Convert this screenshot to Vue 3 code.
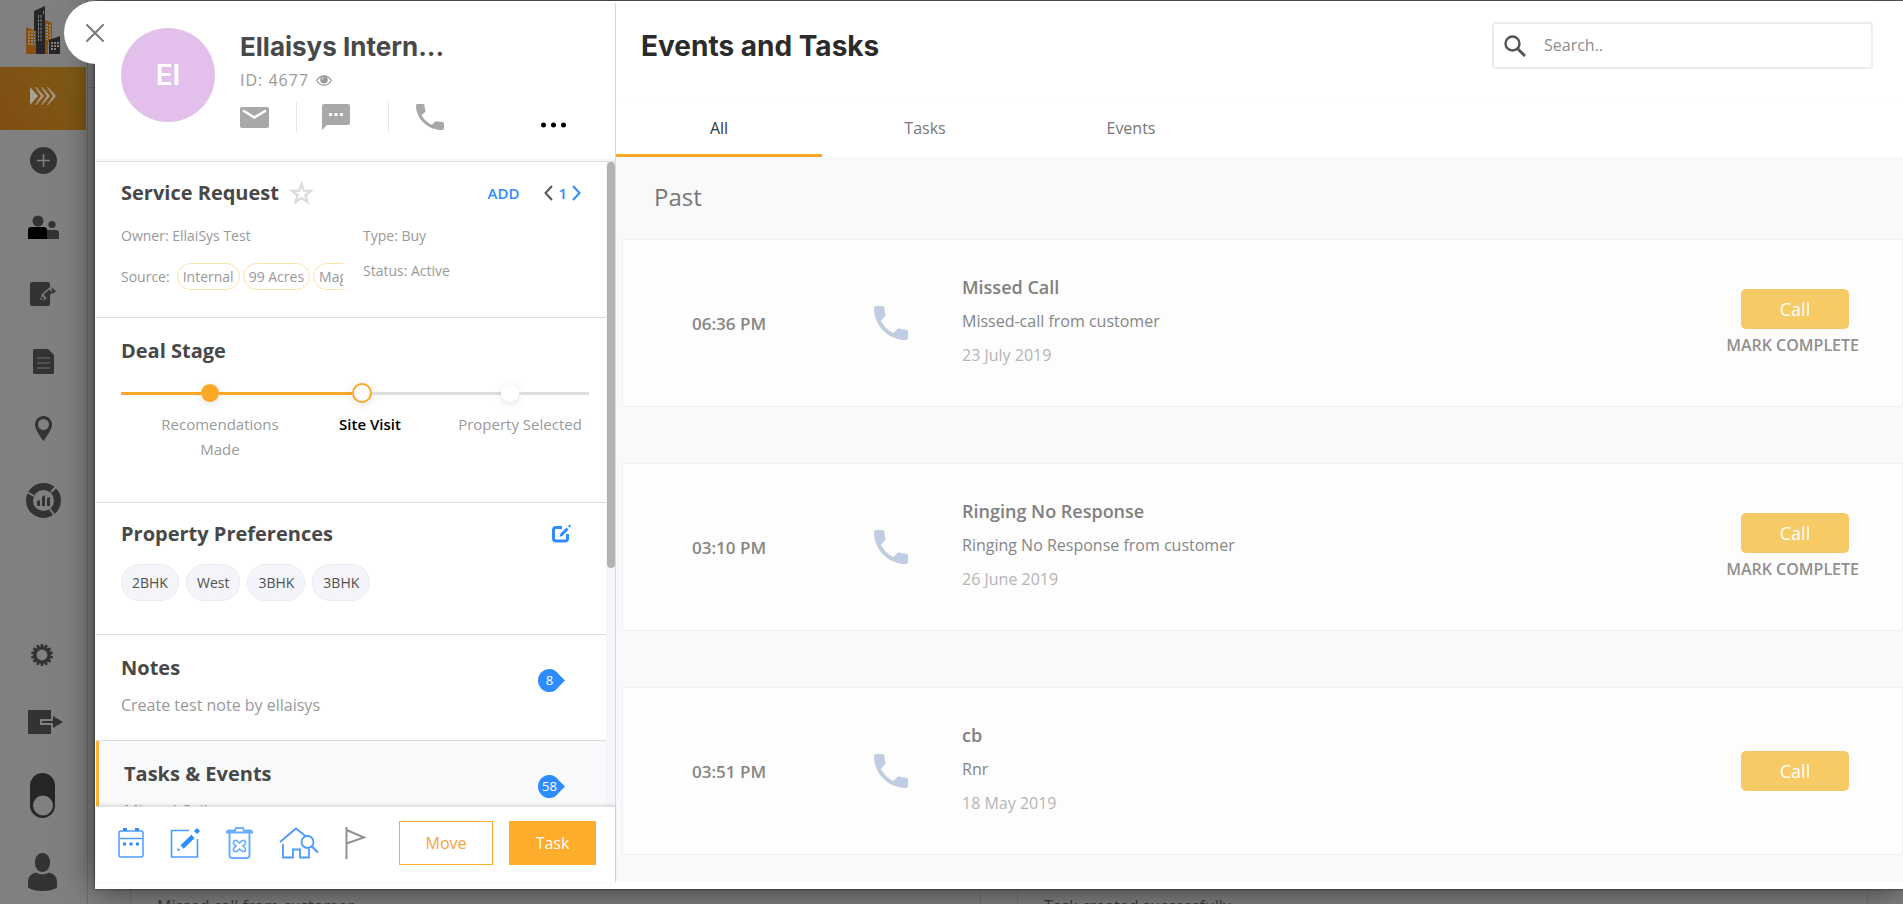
<script setup>
import { ref } from 'vue'

const phone =
  'M6.62 10.79c1.44 2.83 3.76 5.14 6.59 6.59l2.2-2.2c.27-.27.67-.36 1.02-.24 1.12.37 2.33.57 3.57.57.55 0 1 .45 1 1V20c0 .55-.45 1-1 1-9.39 0-17-7.61-17-17 0-.55.45-1 1-1h3.5c.55 0 1 .45 1 1 0 1.25.2 2.45.57 3.57.11.35.03.74-.25 1.02l-2.2 2.2z'

const tabs = ['All', 'Tasks', 'Events']
const activeTab = ref('All')
const query = ref('')
const sources = ['Internal', '99 Acres', 'Magicbricks']
const preferences = ['2BHK', 'West', '3BHK', '3BHK']
const events = [
  { time: '06:36 PM', title: 'Missed Call', text: 'Missed-call from customer', date: '23 July 2019', open: true },
  { time: '03:10 PM', title: 'Ringing No Response', text: 'Ringing No Response from customer', date: '26 June 2019', open: true },
  { time: '03:51 PM', title: 'cb', text: 'Rnr', date: '18 May 2019', open: false },
]
const gearTeeth = Array.from({ length: 14 }, (_, i) => (i * 360) / 14)
</script>

<template>
  <div class="app">
    <nav class="sidebar" aria-label="Main">
      <a href="#" class="logo" aria-label="Home">
        <svg width="36" height="50" viewBox="0 0 36 50">
          <path fill="#262626" d="M9 6l11-5v48H9z" />
          <path fill="#8a5012" d="M1 22l10 4v23H1zM20 15l7 3v17l-4 2v12h-3z" />
          <path fill="#262626" d="M24 35l11-4v18H24z" />
          <path stroke="#808080" stroke-width="1" fill="none" stroke-dasharray="3 1" d="M13.500 10v26M16 10v26M18.500 6v4" />
          <path stroke="#8c8070" stroke-width="2" fill="none" stroke-dasharray="2 1" d="M3 27h7M3 30h7M3 33h7M3 36h7M3 39h7M22 19v16M25 20v14M26 38h8M26 41h8M26 44h5" />
        </svg>
      </a>
      <a href="#" class="item active" aria-label="Leads">
        <svg width="26" height="18" viewBox="0 0 26 18" fill="#aaa093">
          <path d="M0 0l8 9-8 9zM5 0h1l8 9-8 9H5l6-9zM11 0h1l8 9-8 9h-1l6-9zM17 0h1l8 9-8 9h-1l6-9z" />
        </svg>
      </a>
      <div class="group">
        <a href="#" class="item" aria-label="Add">
          <svg width="27" height="27" viewBox="0 0 27 27"><circle cx="13.500" cy="13.500" r="13.500" fill="#333" /><path d="M13.500 7v13M7 13.500h13" stroke="#808080" stroke-width="1.600" /></svg>
        </a>
        <a href="#" class="item" aria-label="Contacts">
          <svg width="31" height="24" viewBox="0 0 31 24"><circle cx="10" cy="6" r="5.500" fill="#333" /><circle cx="24" cy="9.500" r="3.600" fill="#333" /><path fill="#333" d="M19 15h9q3 0 3 3v6H19z" /><path fill="#000" d="M3 12h13q3 0 3 3v9H0v-9q0-3 3-3z" /></svg>
        </a>
        <a href="#" class="item" aria-label="Edit">
          <svg width="26" height="24" viewBox="0 0 26 24"><path fill="#333" d="M2 0h16q2 0 2 2v20q0 2-2 2H2q-2 0-2-2V2q0-2 2-2z" /><path d="M10 18l2-6 8-7 4 4-9 9z" fill="#808080" /><path fill="#333" d="M11 18l1-4 3 3zM13.500 12.500l6-5 3 3-6 6zM21 5l5 4-3 3z" /></svg>
        </a>
        <a href="#" class="item" aria-label="Documents">
          <svg width="21" height="25" viewBox="0 0 21 25"><path fill="#333" d="M1 0h14l6 6v18l-1 1H1l-1-1V1z" /><path d="M4 9h13M4 14h13M4 19h13" stroke="#707070" stroke-width="1.200" /></svg>
        </a>
        <a href="#" class="item" aria-label="Places">
          <svg width="17" height="25" viewBox="0 0 17 25"><path fill="#333" fill-rule="evenodd" d="M8.500 0C3.800 0 0 3.700 0 8.500 0 14 8.500 25 8.500 25S17 14 17 8.500C17 3.700 13.200 0 8.500 0zm0 3a5.500 5.500 0 1 1 0 11 5.500 5.500 0 0 1 0-11z" /></svg>
        </a>
        <a href="#" class="item reports" aria-label="Reports">
          <svg width="35" height="35" viewBox="0 0 35 35"><circle cx="17.500" cy="17.500" r="14" fill="none" stroke="#333" stroke-width="7" /><path d="M8 13l-7-4M25 9l6-6M23 25l6 8" stroke="#808080" stroke-width="2" /><path fill="#333" d="M11 18l3-1v6h-3zM16 14l3-2v11h-3zM21 15l3-1v9h-3z" /></svg>
        </a>
      </div>
      <div class="group bottom">
        <a href="#" class="item" aria-label="Settings">
          <svg width="22" height="22" viewBox="0 0 22 22"><circle cx="11" cy="11" r="7.200" fill="none" stroke="#333" stroke-width="3.500" /><rect v-for="a in gearTeeth" :key="a" x="9.700" y="0" width="2.600" height="4" fill="#333" :transform="`rotate(${a} 11 11)`" /></svg>
        </a>
        <a href="#" class="item" aria-label="Log out">
          <svg class="wide" width="35" height="24" viewBox="0 0 35 24"><path fill="#333" d="M0 0h23v9H12v6h11v9H0z" /><path fill="#333" d="M14 11h11V6l10 6-10 6v-5H14z" /></svg>
        </a>
        <a href="#" class="item tall" aria-label="Theme">
          <svg width="25" height="45" viewBox="0 0 25 45"><rect width="25" height="45" rx="12.500" fill="#262626" /><circle cx="13" cy="32.500" r="10" fill="#808080" /></svg>
        </a>
        <a href="#" class="item user" aria-label="Profile">
          <svg width="29" height="38" viewBox="0 0 29 38"><path fill="#333" d="M14.500 0C19 0 22 4 22 9c0 6-3 10-7.500 10S7 15 7 9c0-5 3-9 7.500-9zM8 19.500q6.500 4 13 0 8 2 8 9v6q-5 3.500-14.500 3.500T0 34.500v-6q0-7 8-9z" /></svg>
        </a>
      </div>
    </nav>

    <div class="behind">
      <div class="behind-top"></div>
      <div class="behind-cards">
        <div class="behind-card"><p>Missed call from customer</p></div>
        <div class="behind-card"><p>Task created successfully</p></div>
      </div>
    </div>

    <section class="modal" role="dialog" aria-label="Customer details">
      <button class="close" type="button" aria-label="Close">
        <svg width="18" height="18" viewBox="0 0 18 18"><path d="M1 1l16 16M17 1L1 17" stroke="#7a7a7a" stroke-width="2" stroke-linecap="round" /></svg>
      </button>

      <aside class="details">
        <header class="person">
          <div class="avatar">EI</div>
          <div class="person-info">
            <h1>Ellaisys Intern...</h1>
            <p class="pid">ID: 4677
              <svg width="16" height="11" viewBox="0 0 16 11"><path d="M.7 5.500Q3.500.8 8 .8t7.300 4.700Q12.500 10.200 8 10.200T.7 5.500z" fill="none" stroke="#999" stroke-width="1.200" /><circle cx="8" cy="4.800" r="3.800" fill="#999" /><path d="M6 4.600Q6.200 2.800 8 2.600" stroke="#fff" fill="none" stroke-width=".8" /></svg>
            </p>
            <div class="contact">
              <button type="button" aria-label="Mail"><svg width="29" height="21" viewBox="0 0 29 21"><rect width="29" height="21" rx="2" fill="#a8a8a8" /><path d="M3 3.500l11.500 7 11.500-7" fill="none" stroke="#fff" stroke-width="2.600" /></svg></button>
              <button type="button" aria-label="Message"><svg width="28" height="26" viewBox="0 0 28 26"><path fill="#a8a8a8" d="M2 0h24q2 0 2 2v17q0 2-2 2H5l-5 5V2q0-2 2-2z" /><path fill="#fff" d="M7 9h3v3H7zM12.500 9h3v3h-3zM18 9h3v3h-3z" /></svg></button>
              <button type="button" aria-label="Phone"><svg width="28" height="26" viewBox="3 3 18 18" preserveAspectRatio="none"><path :d="phone" fill="#a8a8a8" /></svg></button>
              <button type="button" class="more" aria-label="More"><svg width="25" height="6" viewBox="0 0 25 6"><circle cx="2.500" cy="3" r="2.500" /><circle cx="12.500" cy="3" r="2.500" /><circle cx="22.500" cy="3" r="2.500" /></svg></button>
            </div>
          </div>
        </header>

        <div class="scroll">
          <div class="sections">
            <section class="block service">
              <div class="head">
                <h2>Service Request</h2>
                <button type="button" aria-label="Favourite"><svg width="25" height="24" viewBox="0 0 25 24"><path d="M12.500 3l2.400 6.600 7.100.3-5.600 4.300 2 6.800-5.900-3.900L6.600 21l2-6.800L3 9.900l7.100-.3z" fill="none" stroke="#dcdcdc" stroke-width="2.400" /></svg></button>
                <button type="button" class="add">ADD</button>
                <div class="pager">
                  <button type="button" aria-label="Previous"><svg width="9" height="16" viewBox="0 0 9 16"><path d="M8 1L1.500 8 8 15" fill="none" stroke="#555" stroke-width="2" /></svg></button>
                  <span>1</span>
                  <button type="button" aria-label="Next"><svg width="9" height="16" viewBox="0 0 9 16"><path d="M1 1l6.500 7L1 15" fill="none" stroke="#2f8cff" stroke-width="2" /></svg></button>
                </div>
              </div>
              <div class="facts">
                <div class="fact-left">
                  <p>Owner: EllaiSys Test</p>
                  <div class="sources"><span>Source:</span><b v-for="s in sources" :key="s">{{ s }}</b></div>
                </div>
                <div class="fact-right">
                  <p>Type: Buy</p>
                  <p>Status: Active</p>
                </div>
              </div>
            </section>

            <section class="block deal">
              <h2>Deal Stage</h2>
              <div class="track">
                <i class="line a done"></i><i class="dot full"></i>
                <i class="line b done"></i><i class="dot ring"></i>
                <i class="line c"></i><i class="dot"></i>
                <i class="line d"></i>
              </div>
              <div class="labels"><span>Recomendations Made</span><span class="now">Site Visit</span><span>Property Selected</span></div>
            </section>

            <section class="block prefs">
              <div class="head">
                <h2>Property Preferences</h2>
                <button type="button" class="edit" aria-label="Edit preferences">
                  <svg width="20" height="20" viewBox="0 0 20 20"><path d="M11 3.500H5Q2.500 3.500 2.500 6v8.500Q2.500 17 5 17h9q2.500 0 2.500-2.500V10" fill="none" stroke="#2f8cff" stroke-width="3" /><path d="M8.500 13l1-3.500 6-6 2 2.200-6 6zM17 2l2-1.500 1 1.500-1.500 1.700z" fill="#2f8cff" /></svg>
                </button>
              </div>
              <div class="chips"><span v-for="(p, i) in preferences" :key="i">{{ p }}</span></div>
            </section>

            <section class="block counted">
              <div><h2>Notes</h2><p>Create test note by ellaisys</p></div>
              <span class="badge">8<svg viewBox="0 0 27 23"><path d="M11.500 0a11.500 11.500 0 1 0 0 23c4 0 7-2 9-5l6.500-6.500L20.500 5c-2-3-5-5-9-5z" fill="#2f8cff" /></svg></span>
            </section>

            <section class="block counted selected">
              <div><h2>Tasks &amp; Events</h2><p>Missed Call</p></div>
              <span class="badge">58<svg viewBox="0 0 27 23"><path d="M11.500 0a11.500 11.500 0 1 0 0 23c4 0 7-2 9-5l6.500-6.500L20.500 5c-2-3-5-5-9-5z" fill="#2f8cff" /></svg></span>
            </section>
          </div>
          <div class="bar"><i></i></div>
        </div>

        <footer class="actions">
          <button type="button" aria-label="Schedule"><svg width="26" height="30" viewBox="0 0 26 30" fill="none" stroke="#4c9cff" stroke-width="1.500"><rect x="1" y="3" width="24" height="26" rx="2" /><path d="M1 10.500h24" /><path d="M5 1.500h4M17 1.500h4M5 16h3M11.500 16h3M18 16h3" stroke-width="3" stroke="#2f8cff" /></svg></button>
          <button type="button" aria-label="Note"><svg width="30" height="30" viewBox="0 0 30 30" fill="none" stroke="#4c9cff" stroke-width="1.600"><path d="M19 2.500H1.500V29H27.500V11" /><path d="M12 19L23 8.500" stroke="#2f8cff" stroke-width="4.500" /><path fill="#2f8cff" stroke="none" d="M24 3l3-3 3 3-3 3zM7.500 20l3 2-3 1z" /></svg></button>
          <button type="button" aria-label="Delete"><svg width="27" height="32" viewBox="0 0 27 32" fill="none" stroke="#69adff" stroke-width="2"><path d="M1 5.500q0-2 2-2h6l1-2.500h7l1 2.500h6q2 0 2 2H1zM3.500 6v22q0 3 3 3h14q3 0 3-3V6" /><path d="M8 14q2-2 5.500 2 3.500-4 5.500-2t-2 5q4 3.500 2 5t-5.500-2q-3.500 4-5.500 2t2-5q-4-3-2-5z" stroke-width="1.600" /></svg></button>
          <button type="button" aria-label="Properties"><svg width="40" height="32" viewBox="0 0 40 32" fill="none" stroke="#4c9cff" stroke-width="1.800"><path d="M1 15L17 1.500 27 9.500M4 17v13.500h10v-8h7v8h9V22" /><circle cx="28.500" cy="15" r="6" /><path d="M33 19.500l6 6" stroke-width="2.200" /></svg></button>
          <button type="button" aria-label="Flag"><svg width="22" height="32" viewBox="0 0 22 32" fill="none" stroke="#929292" stroke-width="2"><path d="M1.500 0v32M1.500 3L19 10.500 1.500 16.500" /></svg></button>
          <button type="button" class="move">Move</button>
          <button type="button" class="task">Task</button>
        </footer>
      </aside>

      <main class="feed">
        <header class="feed-head">
          <h1>Events and Tasks</h1>
          <label class="search">
            <svg width="22" height="22" viewBox="0 0 22 22" fill="none" stroke="#555"><circle cx="8.500" cy="8.500" r="7" stroke-width="2.400" /><path d="M13.500 13.500l7.500 7.500" stroke-width="3" /></svg>
            <input v-model="query" type="text" placeholder="Search.." aria-label="Search" />
          </label>
        </header>
        <div class="tabs" role="tablist">
          <button v-for="t in tabs" :key="t" type="button" role="tab" :class="{ on: t === activeTab }" :aria-selected="t === activeTab" @click="activeTab = t">{{ t }}</button>
        </div>
        <div class="list">
          <h2>Past</h2>
          <article v-for="e in events" :key="e.date" class="card">
            <time>{{ e.time }}</time>
            <svg width="34" height="34" viewBox="3 3 18 18"><path :d="phone" fill="#bfcde0" /></svg>
            <div class="info"><h3>{{ e.title }}</h3><p>{{ e.text }}</p><p class="date">{{ e.date }}</p></div>
            <div class="card-actions">
              <button type="button" class="call">Call</button>
              <button v-if="e.open" type="button" class="mark">MARK COMPLETE</button>
            </div>
          </article>
        </div>
      </main>
    </section>
  </div>
</template>

<style>
body { overflow: hidden; }
</style>

<style scoped>
.app { position: relative; display: flex; height: 100vh; overflow: hidden; background: #808080; font-family: "Open Sans", "Noto Sans", sans-serif; }
.app * { box-sizing: border-box; }
h1, h2, h3, p { margin: 0; }
button { padding: 0; border: 0; background: none; font: inherit; color: inherit; cursor: pointer; display: flex; align-items: center; }
svg { display: block; flex: none; }

.sidebar { width: 88px; flex: none; border-right: 1px solid #6c6c6c; display: flex; flex-direction: column; }
.logo { height: 67px; flex: none; padding: 5px 0 0 25px; }
.item { height: 60px; width: 86px; display: flex; align-items: center; justify-content: center; }
.item.active { height: 63px; flex: none; padding-bottom: 6px; background: linear-gradient(60deg, #804d12, #7f5c16); }
.group { display: flex; flex-direction: column; gap: 7px; }
.item.reports { height: 70px; }
.bottom { margin-top: auto; gap: 0; }
.bottom .item { width: 84px; height: 67px; padding-bottom: 2px; }
.bottom .tall { height: 81px; }
.bottom .user { padding: 3px 0 0; }
.wide { margin-left: 6px; }

.behind { flex: 1; display: flex; flex-direction: column; }
.behind-top { height: 88px; border-bottom: 1px solid #707070; }
.behind-cards { flex: 1; display: grid; grid-template-columns: 1fr 1fr; gap: 36px; padding: 0 35px 0 42px; }
.behind-card { border: solid #727272; border-width: 0 1px; display: flex; flex-direction: column; justify-content: flex-end; height: 100%; padding-left: 26px; font-size: 16px; line-height: 24px; color: #3c3c3c; }
.behind-card p { margin-bottom: -14px; }

.modal { position: absolute; inset: 1px 0 15px 95px; background: #fff; display: flex; padding: 2px 0 7px 1px; box-shadow: 0 0 32px rgba(0, 0, 0, .6), 0 0 2px rgba(0, 0, 0, .7); }
.close { position: absolute; left: -31px; top: 0; width: 63px; height: 63px; border-radius: 32px 0 0 32px; background: #fff; padding-left: 22px; }

.details { width: 520px; flex: none; border-right: 1px solid #dadada; display: flex; flex-direction: column; }
.person { display: flex; padding: 25px 49px 29px 25px; border-bottom: 1px solid #dcdcdc; box-shadow: inset 0 -2px #f6f6f6; }
.avatar { position: relative; width: 94px; height: 94px; flex: none; border-radius: 50%; background: #e3c0eb; color: #fff; display: flex; align-items: center; justify-content: center; font: 600 28px/40px Inter, sans-serif; }
.person-info { flex: 1; margin-left: 25px; }
.person-info h1, .feed-head h1 { font: 700 26px/38px Inter, sans-serif; color: #484848; }
.pid { display: flex; align-items: center; gap: 7px; margin-top: 3px; font-size: 16px; line-height: 22px; letter-spacing: 1px; color: #999; }
.contact { display: flex; height: 30px; margin-top: 11px; }
.contact button:nth-child(1) { width: 57px; border-right: 1px solid #e6e6e6; }
.contact button:nth-child(2) { width: 92px; padding-left: 25px; border-right: 1px solid #e6e6e6; }
.contact button:nth-child(3) { padding-left: 27px; }
.contact .more { margin-left: auto; align-self: flex-end; height: 14px; }

.scroll { flex: 1; min-height: 0; display: flex; overflow: hidden; }
.sections { flex: 1; }
.bar { width: 9px; background: #f5f6fa; }
.bar i { display: block; width: 8px; height: 63%; border-radius: 4px; background: #b2b2b2; margin-left: 1px; }
.block { border-bottom: 1px solid #dcdcdc; padding: 19px 17px 0 25px; }
h2 { font-size: 20px; line-height: 28px; font-weight: 700; color: #484848; }
.head { display: flex; align-items: center; }
.service { padding: 17px 25px 27px; }
.service .head h2 { margin-right: 10px; }
.add { margin-left: auto; color: #2f8cff; font-size: 15px; font-weight: 600; }
.pager { display: flex; align-items: center; gap: 5px; margin-left: 25px; color: #2f8cff; font-size: 15px; font-weight: 600; }
.facts { display: flex; gap: 20px; margin-top: 17px; font-size: 14px; line-height: 24px; color: #999; }
.fact-left { width: 222px; overflow: hidden; display: flex; flex-direction: column; gap: 15px; }
.fact-right { display: flex; flex-direction: column; gap: 11px; }
.sources { display: flex; align-items: center; height: 27px; gap: 3px; white-space: nowrap; }
.sources span { margin-right: 4px; }
.sources b { font-weight: 400; height: 27px; padding: 0 5px; border: 1px solid #ffe0b0; border-radius: 14px; line-height: 26px; }

.deal { padding-bottom: 40px; }
.track { display: flex; align-items: center; height: 20px; margin-top: 18px; }
.line { height: 3px; background: #dedede; }
.line.done { background: #fca728; }
.a { flex: 80; } .b { flex: 133; } .c { flex: 129; } .d { flex: 70; }
.dot { width: 18px; height: 18px; flex: none; border-radius: 50%; background: #fff; box-shadow: 0 2px 8px rgba(0, 0, 0, .12); }
.dot.full { background: #fca728; }
.dot.ring { width: 20px; height: 20px; border: 2px solid #fca728; }
.labels { display: grid; grid-template-columns: repeat(3, 150px); justify-content: end; margin: 9px -6px 0 0; font-size: 15px; line-height: 25px; text-align: center; color: #9a9a9a; }
.labels span { padding: 0 10px; }
.labels .now { color: #000; font-weight: 600; }

.prefs { padding-top: 17px; padding-bottom: 33px; }
.edit { margin-left: auto; margin-right: 18px; }
.chips { display: flex; gap: 7px; margin-top: 16px; }
.chips span { padding: 0 10px; height: 37px; line-height: 35px; border: 1px solid #ebebee; border-radius: 19px; background: #f4f5fa; font-size: 14px; color: #505050; }

.counted { display: flex; justify-content: space-between; padding-right: 41px; padding-bottom: 23px; }
.counted p { margin-top: 11px; font-size: 16px; line-height: 24px; color: #999; }
.selected { background: #f8f9fb; border-left: 3px solid #ffb02e; }
.badge { position: relative; width: 27px; height: 23px; margin-top: 15px; padding: 0 5px 0 1px; z-index: 0; font-size: 13px; line-height: 23px; color: #fff; display: flex; justify-content: center; }
.badge svg { position: absolute; inset: 0; width: 27px; height: 23px; z-index: -1; }

.actions { position: relative; display: flex; align-items: flex-start; height: 76px; padding: 14px 19px 0 22px; border-top: 1px solid #dedede; box-shadow: 0 -1px 3px rgba(0, 0, 0, .12); color: #fff; background: #fff; }
.actions button { height: 44px; margin-right: 26px; }
.actions button:nth-child(5) { margin-right: 32px; }
.actions .move { margin-right: 16px; width: 94px; justify-content: center; border: 1px solid #fdac2b; color: #f5a243; font-size: 16px; }
.actions .task { margin: 0; width: 87px; justify-content: center; background: #fdac2b; font-size: 16px; }

.feed { flex: 1; min-width: 0; display: flex; flex-direction: column; }
.feed-head { display: flex; justify-content: space-between; align-items: center; padding: 19px 30px 29px 25px; border-bottom: 1px solid #fcfcfc; }
.feed-head h1 { font-size: 28px; color: #2b2b2b; }
.search { display: flex; align-items: center; width: 381px; height: 47px; border: 2px solid #ececec; border-radius: 4px; padding-left: 10px; }
.search input { flex: 1; min-width: 0; margin-left: 18px; border: 0; outline: 0; background: none; font: 16px/22px "Open Sans", "Noto Sans", sans-serif; color: #444; padding: 0 0 2px; }
.search input::placeholder { color: #8c8c8c; opacity: 1; }
.tabs { display: flex; height: 58px; flex: none; }
.tabs button { width: 206px; justify-content: center; border-bottom: 3px solid transparent; padding-top: 2px; font-size: 16px; color: #777; }
.tabs .on { border-color: #f9a825; color: #333; }
.list { flex: 1; min-height: 0; overflow: hidden; background: #f8f9fb; padding-left: 6px; }
.list h2 { height: 82px; padding: 0 32px 2px; line-height: 80px; font-size: 24px; font-weight: 400; color: #777; }
.card { display: flex; align-items: center; height: 168px; margin-bottom: 56px; padding: 0 43px 0 69px; border: 1px solid #f0f1f2; background: #fdfdfd; }
.card time { width: 182px; font-size: 17px; font-weight: 600; color: #868686; }
.info { flex: 1; margin-left: 54px; padding-bottom: 5px; font-size: 16px; line-height: 34px; color: #868686; }
.info h3 { font-size: 18px; line-height: 34px; font-weight: 600; color: #808080; }
.info .date { color: #b5b5b5; }
.card-actions { display: flex; flex-direction: column; align-items: flex-end; gap: 4px; padding-bottom: 1px; }
.call { width: 108px; height: 40px; margin-right: 10px; justify-content: center; border-radius: 5px; background: #f6ca65; color: #fff; font-size: 18px; }
.mark { font-size: 16px; line-height: 24px; font-weight: 600; color: #909090; }
</style>
